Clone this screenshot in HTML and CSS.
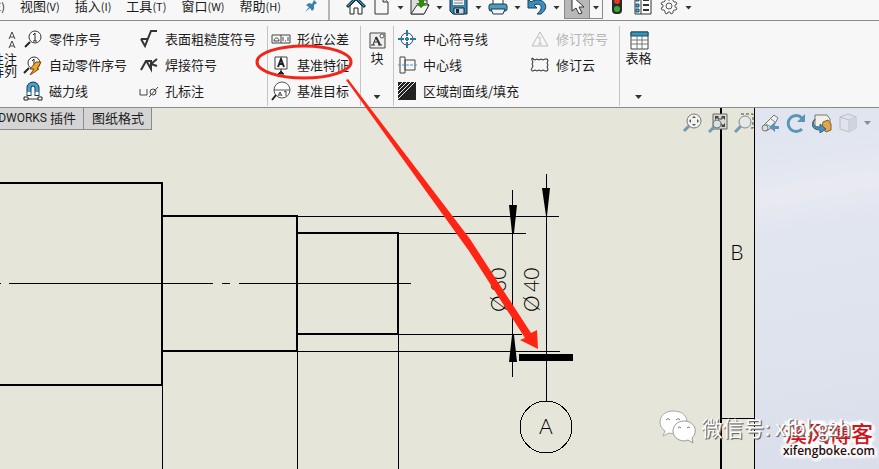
FILE: index.html
```html
<!DOCTYPE html>
<html lang="zh-CN">
<head>
<meta charset="utf-8">
<title>SOLIDWORKS</title>
<link rel="stylesheet" href="styles.css">
</head>
<body>
<header class="menubar">
  <nav class="menus">
    <button class="menu">编辑<span class="key">(E)</span></button>
    <button class="menu">视图<span class="key">(V)</span></button>
    <button class="menu">插入<span class="key">(I)</span></button>
    <button class="menu">工具<span class="key">(T)</span></button>
    <button class="menu">窗口<span class="key">(W)</span></button>
    <button class="menu">帮助<span class="key">(H)</span></button>
    <button class="pin" aria-label="固定"><svg width="14" height="14" viewBox="0 0 14 14"><path d="M1 13 5 8 2 6 5 4 8 5 10 1 13 4 10 6 10 10 8 12 6 9Z" fill="#3483ad"/></svg></button>
  </nav>
  <div class="quick">
    <button class="tool home" aria-label="主页"><svg width="20" height="20" viewBox="0 0 20 20"><path d="M4 10v8h4v-6h4v6h4v-8l-6-6z" fill="#fafafa" stroke="#222"/><path d="M1 11 10 2l9 9" fill="none" stroke="#173d50" stroke-width="3"/><path d="M2 10 10 2l8 8" fill="none" stroke="#4aa3cc" stroke-width="1"/></svg></button>
    <button class="tool" aria-label="新建"><svg width="20" height="20" viewBox="0 0 20 20"><path d="M4 1h8l5 5v12H4z" fill="#f6f6f6" stroke="#333"/><path d="M12 1v5h5" fill="#ddd" stroke="#333"/></svg></button>
    <i class="caret"></i>
    <button class="tool" aria-label="打开"><svg width="20" height="20" viewBox="0 0 20 20"><path d="M1 18V2h5l2 2h9v4l2 1-5 9z" fill="#ddd" stroke="#333"/><path d="M1 18 7 9h12l-5 9z" fill="#f4f4f4" stroke="#333"/><path d="M9 0h5v7h3l-6 5-5-5h3z" fill="#2e8b0b"/></svg></button>
    <i class="caret"></i>
    <button class="tool" aria-label="保存"><svg width="20" height="20" viewBox="0 0 20 20"><path d="M1 1h17v17H4l-3-3z" fill="#3d84aa" stroke="#132f40"/><path d="M4 1h11v8H4z" fill="#f4f4f4"/><path d="M5 4h9M5 7h9" stroke="#777"/><path d="M5 12h10v6H5z" fill="#c8d8e2" stroke="#132f40"/><path d="M7 13h3v4H7z" fill="#132f40"/></svg></button>
    <i class="caret"></i>
    <button class="tool" aria-label="打印"><svg width="20" height="20" viewBox="0 0 20 20"><path d="M5 1h10v8H5z" fill="#fff" stroke="#333"/><rect x="1" y="8" width="18" height="7" rx="2" fill="#4f9cc0" stroke="#173a4d"/><path d="M3 13h14l-2 5H5z" fill="#f2f2f2" stroke="#173a4d"/></svg></button>
    <i class="caret"></i>
    <button class="tool" aria-label="撤销"><svg width="20" height="20" viewBox="0 0 20 20"><path d="M1 3v9h9L7 9c5-2 8 0 7 4-1 2-2 3-4 5h4c4-3 6-7 4-10-2-4-8-6-14-2z" fill="#3b8dbb" stroke="#173e55"/></svg></button>
    <i class="caret"></i>
  </div>
  <div class="quick-end">
    <div class="select-group">
      <button class="select-tool" aria-label="选择"><svg width="16" height="20" viewBox="0 0 16 20"><path d="M3 0v15l4-3 3 6 3-1-3-6h5z" fill="#fff" stroke="#333"/></svg></button>
      <button class="select-drop" aria-label="选择选项"><i class="caret"></i></button>
    </div>
    <button class="tool" aria-label="重建"><svg width="20" height="20" viewBox="0 0 20 20"><rect x="5" y="-3" width="10" height="21" rx="4" fill="#292b2a"/><circle cx="10" cy="5" r="3" fill="#e23b20"/><circle cx="10" cy="13" r="3" fill="#37ad35"/></svg></button>
    <button class="tool" aria-label="属性"><svg width="20" height="20" viewBox="0 0 20 20"><path d="M2 0h16v18H2z" fill="#fff" stroke="#333"/><path d="M8 0v18" stroke="#333"/><path d="M3 2h3v3H3zM3 8h3v3H3zM3 13h3v3H3z" fill="#57aad2" stroke="#164e6c"/><path d="M10 4h6M10 9h6M10 14h6" stroke="#333" stroke-width="2"/></svg></button>
    <button class="tool" aria-label="选项"><svg width="20" height="20" viewBox="0 0 20 20"><path d="m8 2 1 2h2l1-2 2 1v2l1 1h2l1 2-2 1v2l2 1-1 2h-2l-1 1v2l-2 1-1-2H9l-1 2-2-1v-2l-1-1H3l-1-2 2-1V9L2 8l1-2h2l1-1V3z" fill="#f8f8f8" stroke="#555"/><circle cx="10" cy="10" r="3" fill="none" stroke="#555"/></svg></button>
    <i class="caret"></i>
  </div>
</header>

<section class="ribbon">
  <button class="big cut"><svg width="20" height="20" viewBox="0 0 20 20"><path d="m12 9 3-7 3 7m-5-2h4M12 18l3-7 3 7m-5-2h4" fill="none" stroke="#444"/></svg><span>线性注<br>释阵列</span></button>
  <div class="col balloon">
    <button class="cmd"><svg width="20" height="20" viewBox="0 0 20 20"><circle cx="12" cy="8" r="6" fill="#fff" stroke="#333"/><path d="m7 13-5 5" stroke="#222" stroke-width="2"/><path d="m10 6 2-2v8m-2 0h4" fill="none" stroke="#222"/></svg>零件序号</button>
    <button class="cmd"><svg width="20" height="20" viewBox="0 0 20 20"><circle cx="11" cy="8" r="6" fill="#fff" stroke="#333"/><path d="m6 13-5 5" stroke="#222" stroke-width="2"/><path d="m9 6 2-2v8" fill="none" stroke="#222"/><path d="m13 7-6 7h4l-4 6 9-6h-2l4-7z" fill="#f3a52e" stroke="#754714"/></svg>自动零件序号</button>
    <button class="cmd"><svg width="20" height="20" viewBox="0 0 20 20"><path d="M6 15V7a4 4 0 0 1 8 0v8" fill="none" stroke="#173f54" stroke-width="5"/><path d="M6 14V7a4 4 0 0 1 8 0v7" fill="none" stroke="#4ba3cb" stroke-width="3"/><path d="M6 11v3M14 11v3" stroke="#fff" stroke-width="3"/><path d="M2 18h16" stroke="#333"/><path d="M1 16h4v3H1zM15 16h4v3h-4z" fill="#fff" stroke="#222"/></svg>磁力线</button>
  </div>
  <div class="col symbols">
    <button class="cmd"><svg width="20" height="20" viewBox="0 0 20 20"><path d="m2 10 4 7 6-15h6M2 10h7" fill="none" stroke="#333" stroke-width="2"/></svg>表面粗糙度符号</button>
    <button class="cmd"><svg width="20" height="20" viewBox="0 0 20 20"><path d="m2 15 5-9h6M8 7l4 7V6m0 3 6-5m-6 5 6 2" fill="none" stroke="#333" stroke-width="2"/></svg>焊接符号</button>
    <button class="cmd"><svg width="20" height="20" viewBox="0 0 20 20"><path d="M1 8v6h7V8m2 8 9-10" fill="none" stroke="#444"/><circle cx="14" cy="11" r="3" fill="none" stroke="#444"/></svg>孔标注</button>
  </div>
  <div class="col datum">
    <button class="cmd"><svg width="20" height="20" viewBox="0 0 20 20"><path d="M1 6h18v8H1zM10 6v8M3 12c0-4 5-4 5 0zM12 8v4m2 0h1m2-4v4" fill="none" stroke="#444"/></svg>形位公差</button>
    <button class="cmd"><svg width="20" height="20" viewBox="0 0 20 20"><path d="M4 2h12v12H4z" fill="#fff" stroke="#444"/><path d="m7 12 3-8 3 8m-5-3h4" fill="none" stroke="#222" stroke-width="2"/><path d="M10 14v2l-3 3h6l-3-3" fill="#222" stroke="#222"/></svg>基准特征</button>
    <button class="cmd"><svg width="20" height="20" viewBox="0 0 20 20"><circle cx="11" cy="9" r="8" fill="#fff" stroke="#555"/><path d="M3 9h16" stroke="#555"/><path d="m5 14-4 5" stroke="#222" stroke-width="2"/><path d="m7 15 2-4 2 4m-3-1h2m3-3 2-1v5" fill="none" stroke="#444"/></svg>基准目标</button>
  </div>
  <button class="big block"><svg width="20" height="20" viewBox="0 0 20 20"><path d="M3 3h15v15H3z" fill="#eee" stroke="#444"/><path d="m6 15 3-8 4 8m-6-3h5M4 15h4m3 0h4" fill="none" stroke="#333"/><path d="m9 7 4 8" stroke="#333" stroke-width="2"/><circle cx="15" cy="6" r="2" fill="#fff" stroke="#555"/></svg><span>块</span><i class="caret"></i></button>
  <div class="col center">
    <button class="cmd"><svg width="20" height="20" viewBox="0 0 20 20"><circle cx="10" cy="10" r="6" fill="none" stroke="#345"/><path d="M10 1v6m0 6v6M1 10h6m6 0h6M8 10h4m-2-2v4" stroke="#247aa3" stroke-width="2"/></svg>中心符号线</button>
    <button class="cmd"><svg width="20" height="20" viewBox="0 0 20 20"><path d="M3 2h5v16H3zM8 5h10v10H8z" fill="none" stroke="#444"/><path d="M1 10h19" stroke="#4d9abd" stroke-dasharray="3 1"/></svg>中心线</button>
    <button class="cmd"><svg width="20" height="20" viewBox="0 0 20 20"><path d="M1 1h18v18H1z" fill="#222"/><path d="M1 6 6 1M1 10l9-9M1 14 14 1M1 18 18 1" stroke="#eee"/></svg>区域剖面线/填充</button>
  </div>
  <div class="col revision">
    <button class="cmd" disabled><svg width="20" height="20" viewBox="0 0 20 20"><path d="m10 3 8 14H2z" fill="none" stroke="#bbb"/><path d="m8 9 2-1v7m-2 0h4" fill="none" stroke="#bbb"/></svg>修订符号</button>
    <button class="cmd"><svg width="20" height="20" viewBox="0 0 20 20"><path d="M3 4q2 2 4 0 2 2 4 0 2 2 4 0 3-1 3 2-2 2 0 4-2 2 0 4 0 3-3 2-2-2-4 0-2-2-4 0-2-2-4 0-3 0-1-3 2-2 0-4 2-2 0-4-1-2 1-2z" fill="none" stroke="#222"/></svg>修订云</button>
  </div>
  <button class="big table"><svg width="20" height="20" viewBox="0 0 20 20"><path d="M2 2h17v17H2z" fill="#fff" stroke="#444"/><path d="M2 2h17v4H2z" fill="#3b93bc" stroke="#174c67"/><path d="M2 10h17M2 14h17M8 6v13M13 6v13" stroke="#777"/></svg><span>表格</span><i class="caret"></i></button>
</section>

<main class="workspace">
  <svg class="drawing" viewBox="0 108 879 361" width="879" height="361" role="img" aria-label="轴零件工程图">
    <g class="thin">
      <path d="M297 216.500H559M398 233.500H526M398 334.500H522M297 351.500H560M0 283.500h1M9 283.500h204M222 283.500h8M239 283.500h172"/>
      <path d="M162.500 385v84M297.500 351v118M398.500 334v135M512.500 190v187M546.500 174v227M754.500 108v361M721 418.500h33"/>
      <circle cx="546" cy="427" r="26"/>
    </g>
    <path class="thick" d="M0 183h162v202H0M162 216h135v135H162M297 233h101v101H297"/>
    <path d="M720 108h2v361h-2zM519 354h54v7h-54zM509 205h8l-3 28h-2zM512 335h2l3 27h-8zM542 188h8l-3 28h-1z"/>
    <g class="cad">
      <text transform="translate(506 312) rotate(-90)">Ø<tspan x="20">30</tspan></text>
      <text transform="translate(539 312) rotate(-90)">Ø<tspan x="20">40</tspan></text>
      <text x="546" y="434" text-anchor="middle">A</text>
      <text x="737" y="260" text-anchor="middle">B</text>
    </g>
  </svg>
  <div class="task-pane"></div>
  <nav class="tabs">
    <button class="tab addins"><span class="latin">SOLIDWORKS</span> 插件</button>
    <button class="tab">图纸格式</button>
  </nav>
  <div class="view-tools">
    <button class="tool" aria-label="缩放"><svg width="20" height="20" viewBox="0 0 20 20"><path d="m8 12-6 6" stroke="#6e9cb5" stroke-width="3"/><circle cx="12" cy="8" r="7" fill="#f2f2ee" stroke="#777"/><path d="m10 5 2-2 2 2zM10 11l2 2 2-2zM9 6 7 8l2 2zM15 6l2 2-2 2z" fill="#555"/></svg></button>
    <button class="tool" aria-label="整屏显示"><svg width="20" height="20" viewBox="0 0 20 20"><path d="M5 1h14v15H5z" fill="#d8d8d2" stroke="#666"/><path d="M7 7V3h4L10 4l2 2-1 1-2-2zM17 7V3h-4l1 1-2 2 1 1 2-2zM17 10v4h-4l1-1-2-2 1-1 2 2z" fill="#444"/><path d="m6 14-5 5" stroke="#6e9cb5" stroke-width="3"/><circle cx="9" cy="11" r="4" fill="#d8e2e4" stroke="#777"/></svg></button>
    <button class="tool" aria-label="局部放大"><svg width="20" height="20" viewBox="0 0 20 20"><path d="M7 1h12v14h-4" fill="none" stroke="#444" stroke-dasharray="3 2"/><path d="m7 13-6 6" stroke="#6e9cb5" stroke-width="3"/><circle cx="11" cy="9" r="6" fill="#e2e9e8" stroke="#888"/></svg></button>
    <button class="tool" aria-label="上一视图"><svg width="20" height="20" viewBox="0 0 20 20"><path d="M2 14 14 2l4 3-5 9-7 4z" fill="#f0f0ee" stroke="#777"/><circle cx="5" cy="15" r="3" fill="#ddd" stroke="#777"/><path d="m6 11 5 3m0-8 4 3" stroke="#888"/><path d="M19 13h-4V9l-6 5 6 5v-3h4z" fill="#5b95b5"/></svg></button>
    <button class="tool" aria-label="旋转视图"><svg width="20" height="20" viewBox="0 0 20 20"><path d="M16 16A8 8 0 1 1 16 5" fill="none" stroke="#5b95b5" stroke-width="3"/><path d="M19 1v8h-8z" fill="#5b95b5"/></svg></button>
    <button class="tool" aria-label="三维视图"><svg width="20" height="20" viewBox="0 0 20 20"><path d="M3 2h12l3 4v9H3z" fill="#f3f1e7" stroke="#777"/><path d="m11 9 5-2 3 4v6l-5 2-4-4z" fill="#dda64f" stroke="#855f29"/><path d="M3 6c-4 6 0 8 5 8v-3l6 5-6 4v-3C0 17-2 11 3 6z" fill="#4f8fb3" stroke="#35657e"/></svg></button>
    <button class="tool faded" aria-label="显示样式"><svg width="20" height="20" viewBox="0 0 20 20"><path d="m2 4 8-3 8 3v11l-7 4-9-3z" fill="#e1e3e8" stroke="#999"/><path d="m2 4 9 3 7-3m-7 3v12" fill="none" stroke="#999"/><path d="m11 7 7-3v11l-7 4z" fill="#c0c4ca"/></svg></button>
    <i class="caret faded"></i>
  </div>
  <div class="brand">
    <strong class="brand-name">溪风博客</strong>
    <span class="brand-url">xifengboke.com</span>
  </div>
  <div class="wechat">
    <svg width="38" height="34" viewBox="0 0 38 34"><path d="M14 1C6 1 1 6 1 12c0 4 2 7 5 9l-2 5 6-3c11 3 18-3 18-11S21 1 14 1z" fill="#fff" stroke="#aaa"/><path d="M25 11c-7 0-11 5-11 10 0 7 8 12 15 9l5 3-1-5c7-7 2-17-8-17z" fill="#fff" stroke="#999"/><path d="M7 10q2-3 4 0M17 10q2-3 4 0M19 18q2-2 3 0M28 18q2-2 3 0" fill="none" stroke="#777"/></svg>
    <span>微信号: xfbkgzh</span>
  </div>
</main>

<svg class="callout" viewBox="0 0 879 469" width="879" height="469" aria-hidden="true">
  <ellipse cx="304" cy="62" rx="47" ry="16" fill="none" stroke="#f0261a" stroke-width="3"/>
  <path d="M346 80 348 79 470 239 531 333 537 330 538 349 520 340 525 338 469 251z" fill="#ff2413"/>
</svg>
</body>
</html>
```
FILE: styles.css
```css
* { box-sizing: border-box; }
body {
  margin: 0;
  min-height: 100vh;
  display: flex;
  flex-direction: column;
  position: relative;
  overflow: hidden;
  background: #f7f7f7;
  color: #1c1c1c;
  font: 13px/16px "Noto Sans CJK SC", sans-serif;
}
button {
  margin: 0;
  padding: 0;
  border: 0;
  background: none;
  color: inherit;
  font: inherit;
  white-space: nowrap;
}
svg { flex: none; display: block; }

.caret {
  width: 7px;
  height: 4px;
  flex: none;
  background: #333;
  clip-path: polygon(0 0, 100% 0, 50% 100%);
}

/* menu bar */
.menubar {
  display: flex;
  height: 21px;
  overflow: hidden;
  border-bottom: 1px solid #8a8a8a;
}
.menus {
  flex: none;
  display: flex;
  justify-content: flex-end;
  align-items: center;
  gap: 15px;
  width: 330px;
  padding: 0 10px 9px 0;
  border-right: 2px solid #b5b5b5;
}
.menu { flex: none; display: flex; }
.key { font-size: 11px; }
.pin { margin-left: 8px; }
.quick, .quick-end {
  flex: none;
  display: flex;
  align-items: center;
  gap: 6px;
  padding: 0 4px 9px 0;
}
.quick { padding-left: 16px; }
.tool { flex: none; width: 20px; }
.home { margin-right: -1px; }
.quick .caret, .quick-end .caret { margin-top: 4px; }
.select-group { display: flex; margin-right: -2px; }
.select-tool, .select-drop {
  display: flex;
  justify-content: center;
  align-items: center;
  height: 26px;
  border: 1px solid #8a8a8a;
}
.select-tool { width: 26px; background: #b8b8b8; }
.select-drop { width: 13px; border-left: 0; }

/* ribbon */
.ribbon {
  display: flex;
  height: 87px;
  padding: 5px 0 1px;
  border-bottom: 1px solid #8a8a8a;
}
.col { flex: none; padding-left: 3px; }
.cmd {
  display: flex;
  align-items: center;
  gap: 6px;
  height: 26px;
}
.cmd:disabled { color: #b4b4b4; }
.balloon { width: 116px; padding-left: 6px; }
.symbols { width: 134px; padding-left: 6px; }
.datum, .block, .center, .table { border-left: 1px solid #c4c4c4; }
.datum { width: 93px; }
.center { width: 134px; }
.revision { width: 92px; }
.big {
  flex: none;
  display: flex;
  flex-direction: column;
  align-items: center;
  padding: 4px 0 7px;
}
.big .caret { margin-top: auto; }
.block { width: 33px; }
.table { width: 38px; }
.cut {
  width: 17px;
  gap: 3px;
  align-items: flex-end;
  overflow: hidden;
  line-height: 12px;
}

/* drawing area */
.workspace {
  position: relative;
  flex: 1;
  min-height: 361px;
  overflow: hidden;
  background: #e5e5da;
}
.drawing { position: absolute; left: 0; top: 0; z-index: 1; }
.thin { fill: none; stroke: #000; stroke-width: 1; shape-rendering: crispEdges; }
.thick { fill: none; stroke: #000; stroke-width: 2; }
.cad { font: 300 21px Lato, sans-serif; fill: #000; }
.task-pane {
  position: absolute;
  inset: 0 0 0 755px;
  background: linear-gradient(170deg, #dfe4ef 0%, #e2e6f0 15%, #e9eaf1 24%, #e1e5f0 34%, #dfe3ee 65%, #dadeea 100%);
}
.tabs { display: flex; }
.tab {
  height: 22px;
  padding: 0 7px 2px 8px;
  background: #d4d4d4;
  border: 1px solid #8a8a8a;
  border-width: 0 1px 1px 0;
}
.addins {
  display: flex;
  justify-content: flex-end;
  align-items: center;
  gap: 3px;
  width: 84px;
  overflow: hidden;
}
.latin { font: 12px/16px Roboto, sans-serif; }
.view-tools {
  position: absolute;
  z-index: 2;
  top: 5px;
  right: 8px;
  display: flex;
  align-items: center;
  gap: 6px;
}
.faded { opacity: 0.5; }

/* marks in the corner */
.wechat {
  position: absolute;
  z-index: 3;
  right: 28px;
  bottom: 25px;
  display: flex;
  align-items: center;
  gap: 5px;
  color: #fff;
  font-size: 21px;
  line-height: 34px;
  white-space: nowrap;
  text-shadow: 1px 1px 1px #666, 1px 1px 0 #888;
}
.brand {
  position: absolute;
  z-index: 2;
  right: 4px;
  bottom: 10px;
  display: flex;
  flex-direction: column;
  align-items: center;
  text-shadow: 0 0 3px #fff, 3px 0 2px #fff, -3px 0 2px #fff, 0 3px 2px #fff, 0 -3px 2px #fff, 3px 3px 2px #fff, -3px -3px 2px #fff;
}
.brand-name { color: #d0141b; font-size: 22px; font-weight: 500; line-height: 22px; }
.brand-url { color: #2a0a0a; font: 600 12px/16px "Open Sans", sans-serif; }

.callout { position: absolute; left: 0; top: 0; z-index: 5; pointer-events: none; }
```
